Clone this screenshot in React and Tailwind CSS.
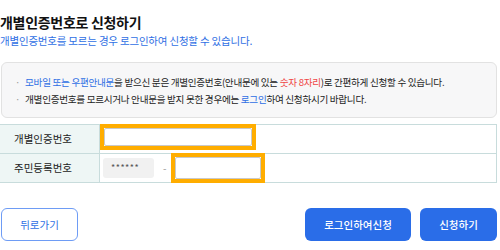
import React from 'react';

const font = { fontFamily: '"Noto Sans CJK KR", "Noto Sans", sans-serif' };

function FocusInput({ className }) {
  return (
    <div className={`border-4 border-[#ffad00] ${className}`}>
      <div className="h-full w-full border border-[#c9c9c9] rounded-[2px] bg-white" />
    </div>
  );
}

export default function App() {
  return (
    <div className="w-[500px] h-[250px] bg-white text-[#222]" style={font}>
      <div className="w-[497px]">
        <h1 className="pt-[12px] text-[14px] leading-[20px] font-bold text-[#111] tracking-[-0.3px]">
          개별인증번호로 신청하기
        </h1>
        <p className="mt-[1px] text-[10.5px] leading-[16px] text-[#2f6fe4] tracking-[-0.2px]">
          개별인증번호를 모르는 경우 로그인하여 신청할 수 있습니다.
        </p>

        <div className="mt-[13px] ml-[1px] h-[56px] rounded-[6px] border border-[#e2e2e2] bg-[#f7f7f8] pl-[13px] pt-[11px] text-[9.6px] leading-[17px] tracking-[-0.3px] text-[#222]">
          <div className="flex items-center gap-[5px]">
            <span className="text-[#999]">·</span>
            <span>
              <span className="text-[#2f6fe4]">모바일 또는 우편안내문</span>을 받으신 분은 개별인증번호(안내문에 있는{' '}
              <span className="text-[#f04646]">숫자 8자리</span>)로 간편하게 신청할 수 있습니다.
            </span>
          </div>
          <div className="flex items-center gap-[5px]">
            <span className="text-[#999]">·</span>
            <span>
              개별인증번호를 모르시거나 안내문을 받지 못한 경우에는{' '}
              <span className="text-[#2f6fe4]">로그인</span>하여 신청하시기 바랍니다.
            </span>
          </div>
        </div>

        <div className="mt-[6px] border-t border-[#c8dcdc]">
          <div className="flex h-[29px] border-b border-[#c8dcdc]">
            <div className="w-[100px] shrink-0 bg-[#eef6f5] border-r border-[#c8dcdc] flex items-center pl-[14px] text-[10.5px] text-[#222]">
              개별인증번호
            </div>
            <div className="flex-1 flex items-start border-r border-[#c8dcdc]">
              <FocusInput className="-mt-[1px] w-[156px] h-[26px]" />
            </div>
          </div>
          <div className="flex h-[29px] border-b border-[#c8dcdc]">
            <div className="w-[100px] shrink-0 bg-[#eef6f5] border-r border-[#c8dcdc] flex items-center pl-[14px] text-[10.5px] text-[#222]">
              주민등록번호
            </div>
            <div className="flex-1 flex items-start border-r border-[#c8dcdc]">
              <div className="mt-[4px] ml-[3px] w-[51px] h-[20px] rounded-[3px] bg-[#f1f1f1] flex items-center pl-[8px] text-[9px] tracking-[0.5px] text-[#555]">
                ******
              </div>
              <span className="mt-[7px] ml-[9px] text-[10px] text-[#999] leading-[14px]">-</span>
              <FocusInput className="-mt-[1px] ml-[5px] w-[94px] h-[30px]" />
            </div>
          </div>
        </div>

        <div className="mt-[25px] flex items-center">
          <button className="ml-[1px] w-[77px] h-[33px] rounded-[6px] border border-[#6e9cf5] bg-white text-[10.5px] text-[#2f6fe4]">
            뒤로가기
          </button>
          <button className="ml-auto w-[106px] h-[33px] rounded-[6px] bg-[#2a6de8] text-[10.5px] font-medium text-white">
            로그인하여신청
          </button>
          <button className="ml-[9px] w-[77px] h-[33px] rounded-[6px] bg-[#2a6de8] text-[10.5px] font-medium text-white">
            신청하기
          </button>
        </div>
      </div>
    </div>
  );
}
